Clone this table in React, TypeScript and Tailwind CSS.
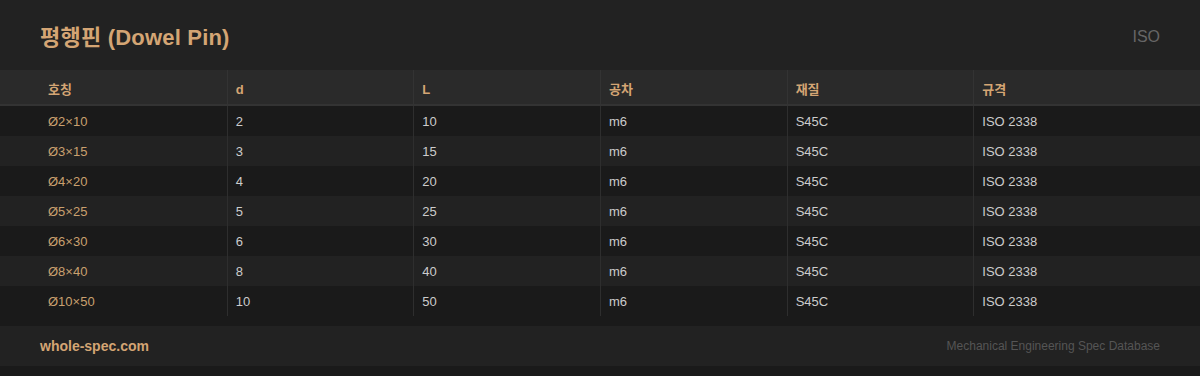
const COLUMNS = ['호칭', 'd', 'L', '공차', '재질', '규격'];

const ROWS = [
  { name: 'Ø2×10', d: '2', l: '10' },
  { name: 'Ø3×15', d: '3', l: '15' },
  { name: 'Ø4×20', d: '4', l: '20' },
  { name: 'Ø5×25', d: '5', l: '25' },
  { name: 'Ø6×30', d: '6', l: '30' },
  { name: 'Ø8×40', d: '8', l: '40' },
  { name: 'Ø10×50', d: '10', l: '50' },
];

const FONT = { fontFamily: '"Liberation Sans", "Noto Sans CJK KR", sans-serif' };

export default function App() {
  return (
    <div className="w-[1200px] h-[376px] bg-[#1a1a1a] overflow-hidden" style={FONT}>
      <header className="h-[70px] bg-[#222222] flex items-center justify-between px-10 pt-1">
        <h1 className="text-[22px] font-bold text-[#d4a574] tracking-[0.2px]">평행핀 (Dowel Pin)</h1>
        <span className="text-base text-[#666666]">ISO</span>
      </header>

      <div className="bg-[#2a2a2a] border-b-2 border-[#333333]">
        <div className="mx-10 grid grid-cols-6 h-[34px]">
          {COLUMNS.map((col, i) => (
            <div
              key={col}
              className={`flex items-center px-2 pt-[5px] text-[13px] font-bold text-[#d4a574] ${i > 0 ? 'border-l border-[#333333]' : ''}`}
            >
              {col}
            </div>
          ))}
        </div>
      </div>

      <div>
        {ROWS.map((row, idx) => (
          <div key={row.name} className={idx % 2 === 1 ? 'bg-[#222222]' : 'bg-[#1a1a1a]'}>
            <div className="mx-10 grid grid-cols-6 h-[30px] text-[13px] text-[#cccccc]">
              <div className="flex items-center px-2 pt-[2px] text-[#c9a06f]">{row.name}</div>
              <div className="flex items-center px-2 pt-[2px] border-l border-[#2e2e2e]">{row.d}</div>
              <div className="flex items-center px-2 pt-[2px] border-l border-[#2e2e2e]">{row.l}</div>
              <div className="flex items-center px-2 pt-[2px] border-l border-[#2e2e2e]">m6</div>
              <div className="flex items-center px-2 pt-[2px] border-l border-[#2e2e2e]">S45C</div>
              <div className="flex items-center px-2 pt-[2px] border-l border-[#2e2e2e]">ISO 2338</div>
            </div>
          </div>
        ))}
      </div>

      <footer className="mt-[10px] h-[40px] bg-[#222222] flex items-center justify-between px-10">
        <span className="text-[14px] font-bold text-[#d4a574]">whole-spec.com</span>
        <span className="text-[12px] text-[#555555]">Mechanical Engineering Spec Database</span>
      </footer>
    </div>
  );
}
